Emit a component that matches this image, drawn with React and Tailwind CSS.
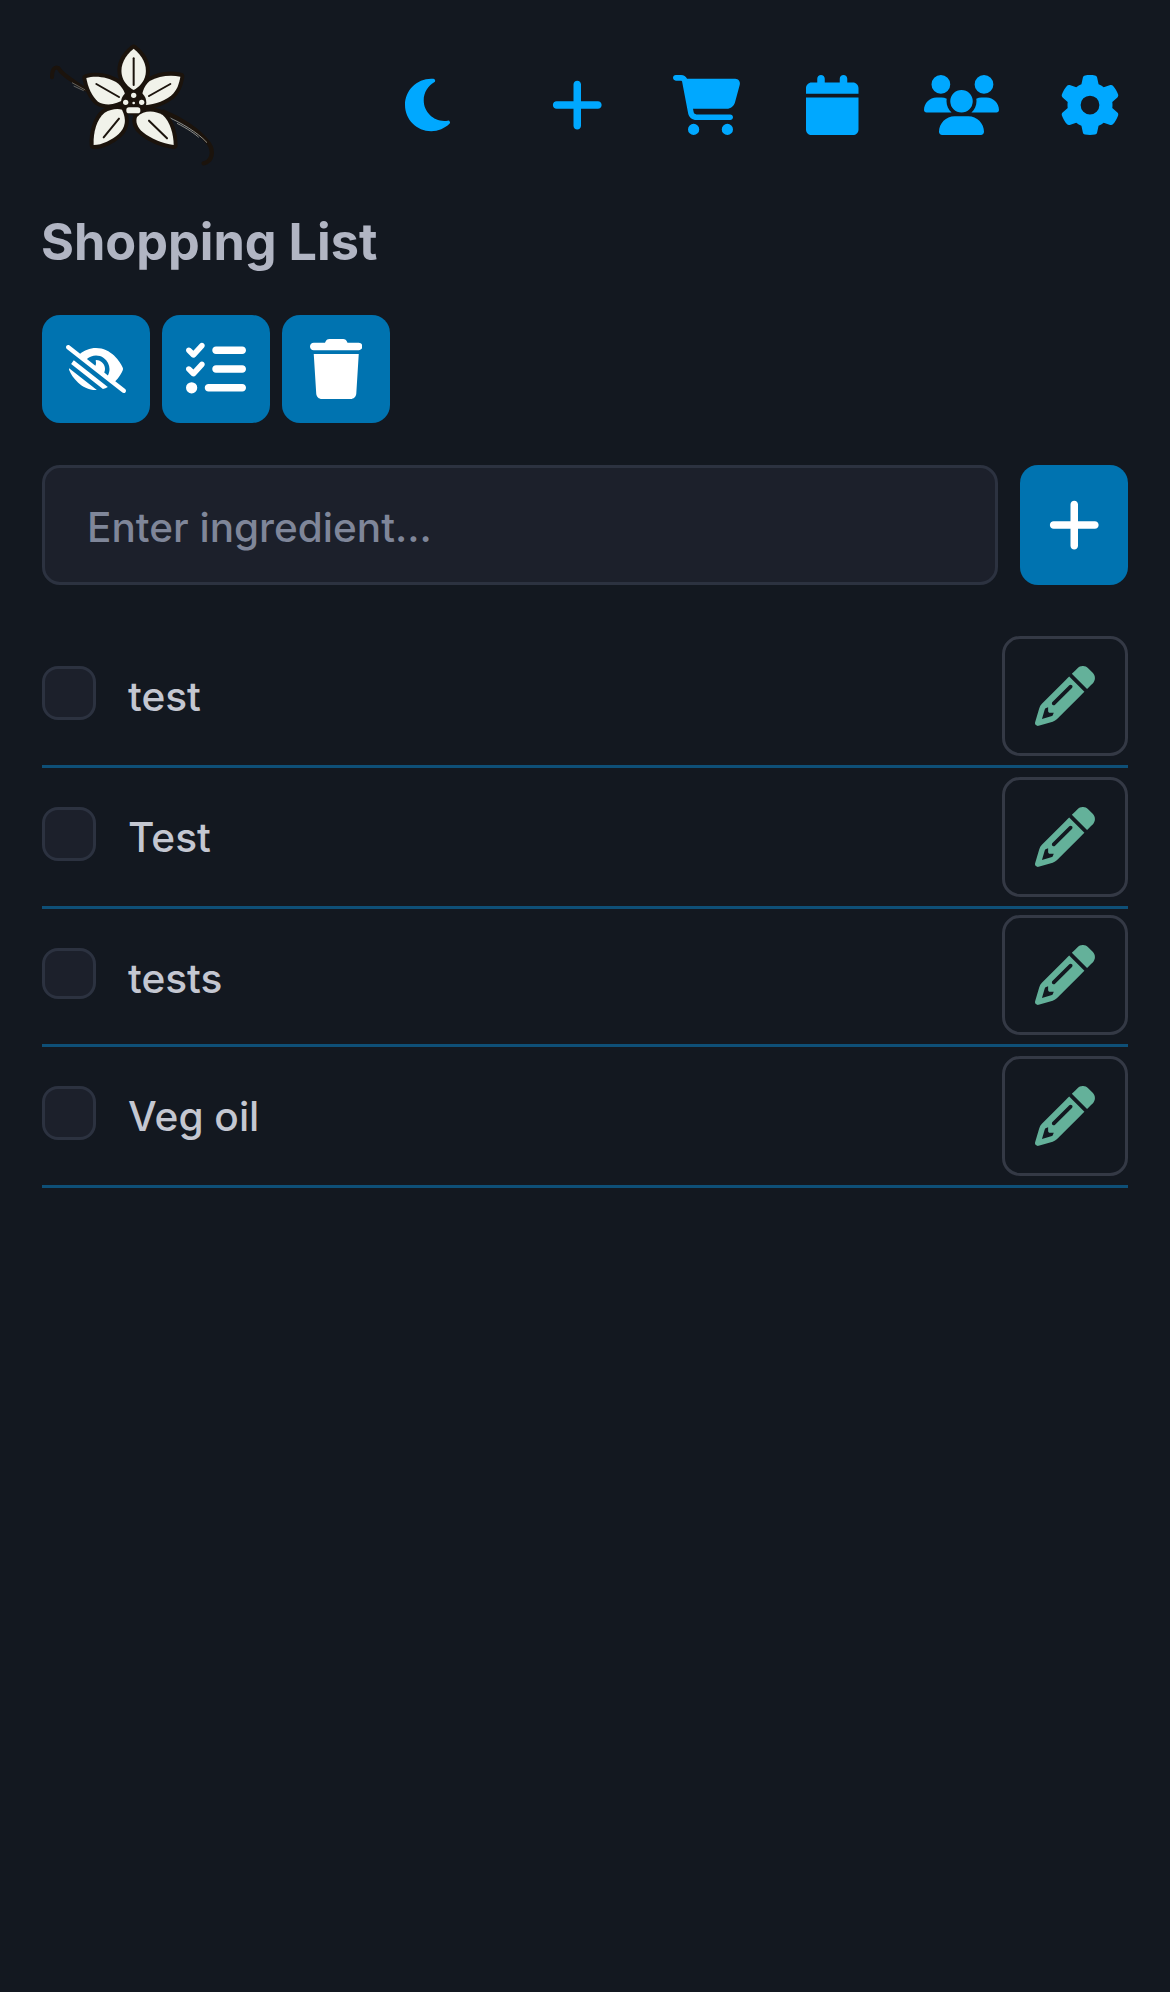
import React from "react";
import { FaMoon, FaPlus, FaCartShopping, FaCalendar, FaUsers, FaGear, FaEyeLowVision, FaListCheck, FaTrash, FaPencil } from "react-icons/fa6";

function Logo() {
  const dark = "#1b130c";
  const cream = "#f1f2ea";
  const petals = [
    ["M310 56 C283 78 270 105 274 132 C278 157 295 172 310 180 C325 172 342 157 346 132 C350 105 337 78 310 56Z", "M310 85 L310 165"],
    ["M450 140 C420 133 385 138 358 153 C338 168 332 200 332 226 C362 226 397 217 422 197 C440 182 447 160 450 140Z", "M420 162 L356 198"],
    ["M168 144 C198 135 235 143 257 156 C277 170 286 190 286 205 C257 226 225 228 203 215 C185 200 172 170 168 144Z", "M198 162 L266 201"],
    ["M190 345 C188 310 198 268 223 248 C240 238 260 235 275 239 C290 270 285 292 265 312 C245 330 215 345 190 345Z", "M220 322 L266 266"],
    ["M430 345 C395 340 363 327 338 307 C320 292 315 275 320 261 C340 240 372 240 397 255 C420 275 430 315 430 345Z", "M410 325 L356 272"],
  ];
  return (
    <svg viewBox="50 30 510 390" className="w-[170px] h-[130px] shrink-0 ml-[5px]">
      <path d="M65 142 C65 120 72 108 84 114 C95 135 125 150 165 178" fill="none" stroke={dark} strokeWidth="12" strokeLinecap="round" />
      <path d="M400 245 C450 265 505 300 535 340 C552 365 545 395 520 400" fill="none" stroke={dark} strokeWidth="13" strokeLinecap="round" />
      <path d="M125 158 L165 180 M130 168 L160 182" stroke="#8d8a80" strokeWidth="2" fill="none" />
      <path d="M415 262 C450 278 500 305 530 338 M440 280 C470 295 495 312 505 322" stroke="#a8a69c" strokeWidth="2.5" fill="none" />
      {petals.map((p, i) => (
        <g key={i}>
          <path d={p[0]} fill={cream} stroke={dark} strokeWidth="24" strokeLinejoin="round" paintOrder="stroke" />
          <path d={p[1]} stroke={dark} strokeWidth="6" strokeLinecap="round" fill="none" />
        </g>
      ))}
      <circle cx="310" cy="218" r="38" fill={dark} />
      <circle cx="310" cy="196" r="8" fill={cream} />
      <circle cx="286" cy="217" r="8" fill={cream} />
      <circle cx="334" cy="217" r="8" fill={cream} />
      <circle cx="310" cy="219" r="4" fill={cream} />
      <rect x="288" y="232" width="42" height="18" rx="8" fill={cream} />
    </svg>
  );
}

const items = [
  { label: "test", top: "pt-[9px]", box: "mt-[30px] h-[54px]", text: "pt-[2px]" },
  { label: "Test", top: "pt-[9px]", box: "mt-[30px] h-[54px]", text: "pt-[2px]" },
  { label: "tests", top: "pt-[6px]", box: "mt-[33px] h-[51px]", text: "pt-[8px]" },
  { label: "Veg oil", top: "pt-[9px]", box: "mt-[30px] h-[54px]", text: "pt-[2px]" },
];

function ActionButton({ children }) {
  return (
    <button className="w-[108px] h-[108px] rounded-[18px] bg-[#0073b0] text-white flex items-center justify-center">
      {children}
    </button>
  );
}

export default function App() {
  return (
    <div className="min-h-screen w-full bg-[#131820] px-[42px] pt-[40px] font-['Inter',sans-serif]">
      <header className="flex items-center text-[#00a8ff]">
        <Logo />
        <FaMoon className="ml-[188px] w-[45px] h-[60px] shrink-0" />
        <FaPlus className="ml-[101px] w-[52.5px] h-[60px] shrink-0" />
        <FaCartShopping className="ml-[69.5px] w-[67.5px] h-[60px] shrink-0" />
        <FaCalendar className="ml-[65.5px] w-[52.5px] h-[60px] shrink-0" />
        <FaUsers className="ml-[65.5px] w-[75px] h-[60px] shrink-0" />
        <FaGear className="ml-[61px] w-[60px] h-[60px] shrink-0" />
      </header>

      <h1 className="mt-[36px] -ml-[1px] text-[50.4px] leading-[72px] font-[650] text-[#b1b5c3]">Shopping List</h1>

      <div className="mt-[37px] flex gap-[12px]">
        <ActionButton><FaEyeLowVision className="w-[60px] h-[48px]" /></ActionButton>
        <ActionButton><FaListCheck className="w-[60px] h-[60px]" /></ActionButton>
        <ActionButton><FaTrash className="w-[52.5px] h-[60px]" /></ActionButton>
      </div>

      <div className="mt-[42px] flex gap-[22px]">
        <input
          placeholder="Enter ingredient..."
          className="flex-1 min-w-0 h-[120px] rounded-[18px] border-[3px] border-[#2c3240] bg-[#1c202b] pl-[42px] pt-[4px] text-[40.5px] font-[450] text-[#c4c7d1] placeholder:text-[#7f8699] outline-none"
        />
        <button className="w-[108px] h-[120px] rounded-[18px] bg-[#0073b0] text-white flex items-center justify-center">
          <FaPlus className="w-[52.5px] h-[60px]" />
        </button>
      </div>

      <ul className="mt-[42px]">
        {items.map((it) => (
          <li key={it.label} className={`flex items-start pb-[9px] border-b-[3px] border-[#0e4f77] ${it.top}`}>
            <span className={`w-[54px] rounded-[16px] border-[3px] border-[#2c3240] bg-[#1c202b] shrink-0 ${it.box}`} />
            <span className={`ml-[32px] flex-1 h-[120px] flex items-center text-[40.6px] font-[450] text-[#c4c7d1] ${it.text}`}>{it.label}</span>
            <button className="w-[126px] h-[120px] rounded-[18px] border-[3px] border-[#343945] text-[#64b19a] flex items-center justify-center shrink-0">
              <FaPencil className="w-[60px] h-[60px]" />
            </button>
          </li>
        ))}
      </ul>
    </div>
  );
}
